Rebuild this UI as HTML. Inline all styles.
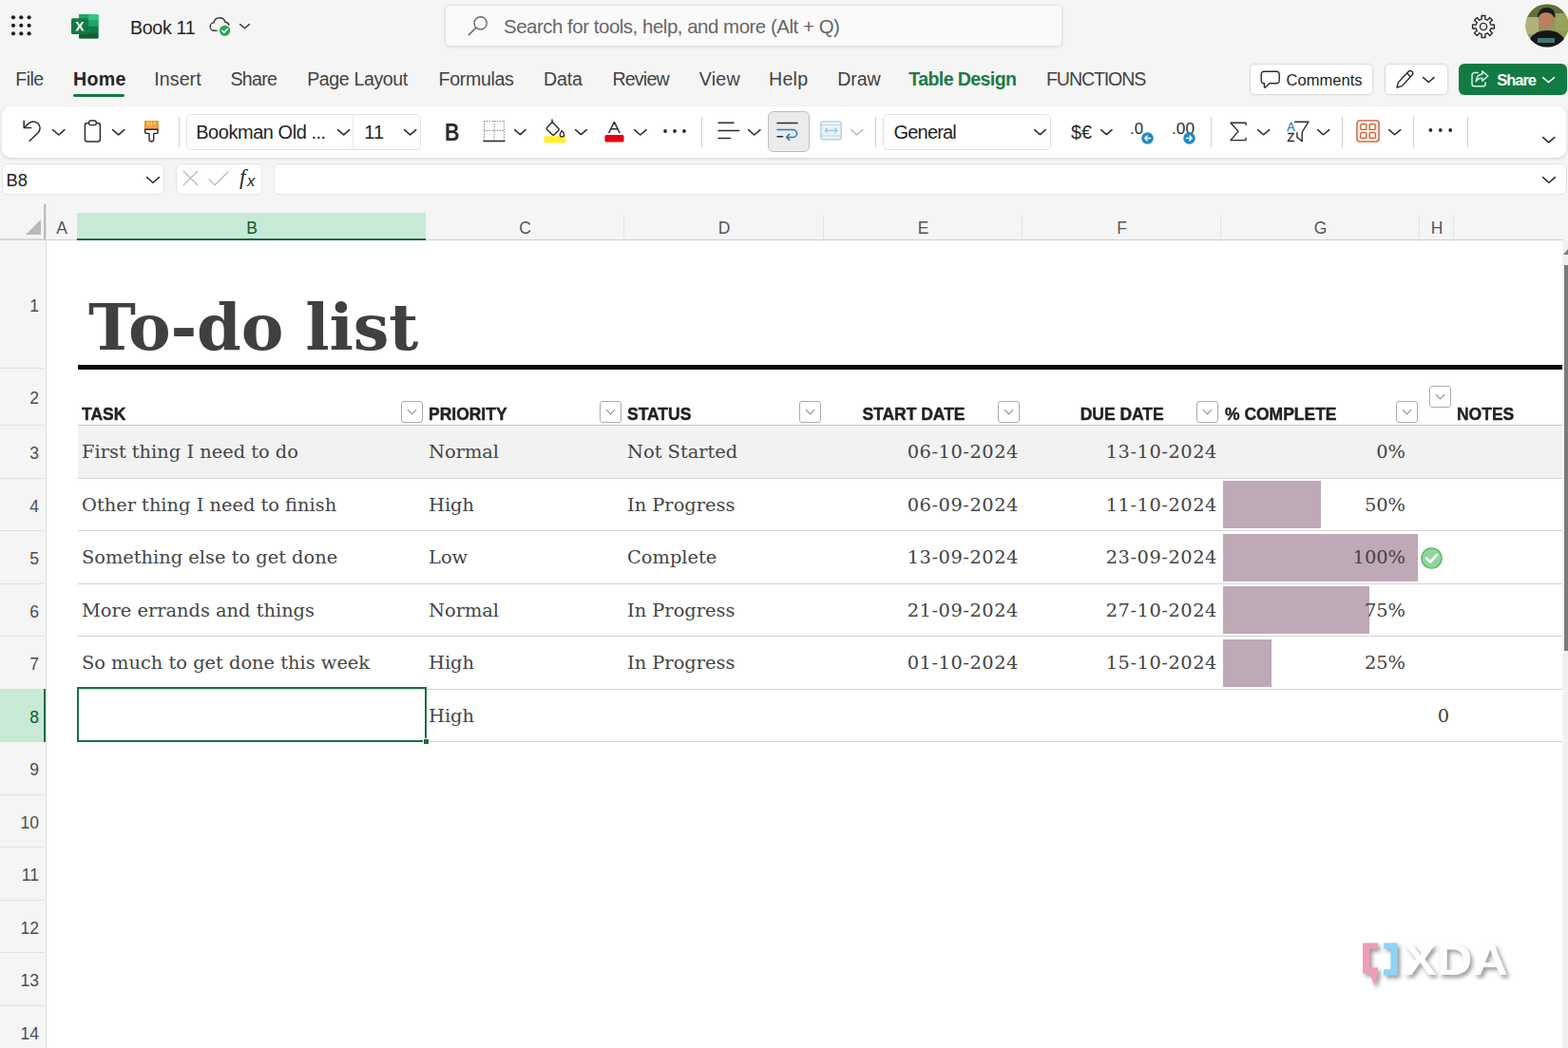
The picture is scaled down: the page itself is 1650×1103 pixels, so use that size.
<!DOCTYPE html>
<html lang="en"><head>
<meta charset="utf-8">
<title>Book 11 - Excel</title>
<style>
*{box-sizing:border-box;margin:0;padding:0}
html,body{width:1650px;height:1103px;overflow:hidden;background:#f5f5f5}
body{position:relative;font-family:"Liberation Sans",sans-serif;color:#242424}
.abs{position:absolute}
.t{position:absolute;white-space:nowrap;line-height:1}
svg{position:absolute;overflow:visible}
/* top bar */
#search{left:468px;top:5px;width:650px;height:44px;background:#fafafa;border:1px solid #e3e3e3;border-radius:5px;box-shadow:0 1px 3px rgba(0,0,0,.10)}
.tab{font-size:19.6px;color:#424242;top:74.4px}
/* ribbon */
#ribbon{left:2px;top:112px;width:1646px;height:54px;background:#fff;border-radius:9px;box-shadow:0 1px 3px rgba(0,0,0,.16)}
.sep{position:absolute;width:1px;background:#d1d1d1;top:123px;height:32px}
.box{position:absolute;background:#fff;border:1px solid #e0e0e0;border-radius:5px}
/* grid */
#grid{left:48px;top:253px;width:1596px;height:850px;background:#fff}
.ch{position:absolute;top:226.6px;height:27px;font-size:17.5px;color:#444;text-align:center;line-height:27px}
.rh{position:absolute;left:0;width:47px;font-size:17.5px;color:#444;text-align:right;padding-right:6px}
.rl{position:absolute;left:0;width:47px;height:1px;background:#e1e1e1}
.cl{position:absolute;top:227px;height:24px;width:1px;background:#e4e4e4}
.hl{position:absolute;left:82px;width:1562px;height:1px;background:#d4d4d4}
.cell{position:absolute;white-space:nowrap;font-family:"DejaVu Serif","Liberation Serif",serif;font-size:19.4px;color:#444;line-height:1}
.r{text-align:right}
.dt{letter-spacing:.55px}
.hd{position:absolute;white-space:nowrap;font-weight:bold;font-size:19px;color:#222;-webkit-text-stroke:.45px #222;line-height:1;top:426px;transform:scaleX(.92);transform-origin:left center}
.hd.rt{transform-origin:right center}
.fb{position:absolute;width:23px;height:23px;border:1px solid #ababab;border-radius:3px;background:#fff}
.fb:after{content:"";position:absolute;left:7px;top:5px;width:6px;height:6px;border-right:1.3px solid #8a8a8a;border-bottom:1.3px solid #8a8a8a;transform:rotate(45deg)}
.bar{position:absolute;left:1287px;height:50px;background:#bea9b6}
</style>
</head>
<body>
<!--TOPBAR-->
<svg style="left:0;top:0" width="44" height="50" viewBox="0 0 44 50" fill="#1f1f1f"><circle cx="14" cy="18.3" r="2.1"></circle><circle cx="14" cy="26.8" r="2.1"></circle><circle cx="14" cy="35.3" r="2.1"></circle><circle cx="22.3" cy="18.3" r="2.1"></circle><circle cx="22.3" cy="26.8" r="2.1"></circle><circle cx="22.3" cy="35.3" r="2.1"></circle><circle cx="30.6" cy="18.3" r="2.1"></circle><circle cx="30.6" cy="26.8" r="2.1"></circle><circle cx="30.6" cy="35.3" r="2.1"></circle></svg>
<svg style="left:75px;top:14px" width="29" height="27" viewBox="0 0 29 27">
    <rect x="8" y="1" width="20.5" height="25.5" rx="1.6" fill="#21a366"></rect>
    <rect x="8" y="1" width="10.3" height="6.4" fill="#21a366"></rect><rect x="18.3" y="1" width="10.2" height="6.4" rx="1" fill="#33c481"></rect>
    <rect x="8" y="7.4" width="10.3" height="6.4" fill="#107c41"></rect><rect x="18.3" y="7.4" width="10.2" height="6.4" fill="#21a366"></rect>
    <rect x="8" y="13.8" width="10.3" height="6.4" fill="#185c37"></rect><rect x="18.3" y="13.8" width="10.2" height="6.4" fill="#107c41"></rect>
    <rect x="8" y="20.2" width="20.5" height="6.3" rx="1.2" fill="#185c37"></rect>
    <rect x="0" y="5.2" width="18" height="16.8" rx="1.6" fill="#107c41"></rect>
    <path d="M4.6 9l3 4.6-3.2 4.8h2.5l2.1-3.5 2.1 3.5h2.5l-3.2-4.8 3-4.6h-2.4l-2 3.3-2-3.3z" fill="#fff"></path></svg>
<div class="t" style="left: 137px; top: 20px; font-size: 19.6px; color: rgb(36, 36, 36); letter-spacing: -0.3px;">Book 11</div>
<svg style="left:220px;top:17px" width="24" height="22" viewBox="0 0 24 22"><path d="M8 15.2H5.6a4.2 4.2 0 0 1-.5-8.4 6.1 6.1 0 0 1 11.9-.6 4 4 0 0 1 3.9 3.2" fill="none" stroke="#3b3b3b" stroke-width="1.4" stroke-linecap="round"></path><circle cx="16.6" cy="15.3" r="5.6" fill="#2ea55a"></circle><path d="M13.9 15.4l1.9 1.9 3.5-3.7" fill="none" stroke="#fff" stroke-width="1.5" stroke-linecap="round" stroke-linejoin="round"></path></svg>
<svg style="left:251.5px;top:25.2px" width="11.0" height="5.5" viewBox="0 0 11.0 5.5"><path d="M0.6 0.6L5.5 4.7L10.4 0.6" fill="none" stroke="#3b3b3b" stroke-width="1.4" stroke-linecap="round" stroke-linejoin="round"></path></svg>
<div class="abs" id="search"></div>
<svg style="left:492px;top:16px" width="22" height="22" viewBox="0 0 22 22"><circle cx="13.6" cy="8.4" r="6.6" fill="none" stroke="#6a6a6a" stroke-width="1.4"></circle><path d="M8.8 13.2L1.4 20.6" stroke="#6a6a6a" stroke-width="1.5" stroke-linecap="round"></path></svg>
<div class="t" style="left: 530px; top: 18px; font-size: 20.4px; color: rgb(102, 102, 102); letter-spacing: -0.45px;">Search for tools, help, and more (Alt + Q)</div>
<svg style="left:1548px;top:15px" width="26" height="26" viewBox="0 0 26 26"><path d="M24.43 11.01L24.43 14.99L20.78 14.87L19.82 17.18L22.49 19.67L19.67 22.49L17.18 19.82L14.87 20.78L14.99 24.43L11.01 24.43L11.13 20.78L8.82 19.82L6.33 22.49L3.51 19.67L6.18 17.18L5.22 14.87L1.57 14.99L1.57 11.01L5.22 11.13L6.18 8.82L3.51 6.33L6.33 3.51L8.82 6.18L11.13 5.22L11.01 1.57L14.99 1.57L14.87 5.22L17.18 6.18L19.67 3.51L22.49 6.33L19.82 8.82L20.78 11.13Z" fill="none" stroke="#2b2b2b" stroke-width="1.4" stroke-linejoin="round"></path><circle cx="13" cy="13" r="3.6" fill="none" stroke="#2b2b2b" stroke-width="1.4"></circle></svg>
<svg style="left:1605px;top:4px" width="46" height="46" viewBox="0 0 46 46"><defs><clipPath id="av"><circle cx="23" cy="23" r="22.6"></circle></clipPath></defs>
    <g clip-path="url(#av)"><rect width="46" height="46" fill="#8f9a55"></rect><rect width="46" height="14" fill="#5d6f3a"></rect><rect x="0" y="14" width="14" height="18" fill="#b3b07a"></rect><rect x="32" y="10" width="14" height="18" fill="#9aa35c"></rect>
    <path d="M2 46C4 33 12 28 23 28s19 5 21 18z" fill="#15171a"></path><ellipse cx="22" cy="17" rx="8" ry="10" fill="#b8805f"></ellipse><path d="M13 15c0-8 5-11 10-11s9 3 8 11c-2-4-5-6-9-6s-7 2-9 6z" fill="#1e1a18"></path><rect x="13" y="36" width="18" height="5" fill="#4f8f8a" opacity=".8"></rect></g></svg>
<!--/TOPBAR-->
<!--TABS-->
<div class="t tab" style="left: 16.2px; letter-spacing: -0.51px;">File</div>
<div class="t tab" style="left: 77px; font-weight: bold; color: rgb(36, 36, 36); letter-spacing: 0.3px;">Home</div>
<div class="t tab" style="left: 162.3px; letter-spacing: 0.07px;">Insert</div>
<div class="t tab" style="left: 242.4px; letter-spacing: -0.68px;">Share</div>
<div class="t tab" style="left: 323.2px; letter-spacing: -0.4px;">Page Layout</div>
<div class="t tab" style="left: 461.5px; letter-spacing: -0.33px;">Formulas</div>
<div class="t tab" style="left: 572px; letter-spacing: -0.14px;">Data</div>
<div class="t tab" style="left: 644.4px; letter-spacing: -0.8px;">Review</div>
<div class="t tab" style="left: 735.7px; letter-spacing: 0.28px;">View</div>
<div class="t tab" style="left: 809px; letter-spacing: 0.25px;">Help</div>
<div class="t tab" style="left: 881.2px; letter-spacing: -0.06px;">Draw</div>
<div class="t tab" style="left: 956.3px; font-weight: bold; color: rgb(27, 122, 69); letter-spacing: -0.62px;">Table Design</div>
<div class="t tab" style="left: 1101px; letter-spacing: -1.12px;">FUNCTIONS</div>
<div class="abs" style="left:77px;top:99px;width:53.5px;height:3.4px;border-radius:2px;background:#117b43"></div>
<div class="box" style="left:1314.5px;top:67px;width:130px;height:32.5px;border-color:#dcdcdc;box-shadow:0 0 2px rgba(0,0,0,.08)"></div>
<svg style="left:1326px;top:74px" width="22" height="20" viewBox="0 0 22 20"><path d="M4 1.2h13.4a2.8 2.8 0 0 1 2.8 2.8v7a2.8 2.8 0 0 1-2.8 2.8H10l-4.6 4.2a.6.6 0 0 1-1-.5v-3.7H4a2.8 2.8 0 0 1-2.8-2.8V4A2.8 2.8 0 0 1 4 1.2z" fill="none" stroke="#2b2b2b" stroke-width="1.4" stroke-linejoin="round"></path></svg>
<div class="t" style="left: 1353.5px; top: 76px; font-size: 16.5px; color: rgb(36, 36, 36); letter-spacing: 0.05px;">Comments</div>
<div class="box" style="left:1456.5px;top:67px;width:67px;height:32.5px;border-color:#dcdcdc;box-shadow:0 0 2px rgba(0,0,0,.08)"></div>
<svg style="left:1468px;top:73px" width="21" height="21" viewBox="0 0 21 21"><path d="M14.2 2.3a2.6 2.6 0 0 1 3.7 3.7L7.2 17.6 2 19l1.4-5.2z" fill="none" stroke="#2b2b2b" stroke-width="1.4" stroke-linejoin="round"></path><path d="M12.6 4l3.7 3.7" stroke="#2b2b2b" stroke-width="1.3"></path></svg>
<svg style="left:1497.0px;top:80.9px" width="12.6" height="6.3" viewBox="0 0 12.6 6.3"><path d="M0.6 0.6L6.3 5.5L12.0 0.6" fill="none" stroke="#2b2b2b" stroke-width="1.5" stroke-linecap="round" stroke-linejoin="round"></path></svg>
<div class="abs" style="left:1535px;top:66.5px;width:114px;height:33px;border-radius:6px;background:#117b43"></div>
<svg style="left:1547px;top:73px" width="21" height="20" viewBox="0 0 21 20"><path d="M8.2 3.6H4.6A2.6 2.6 0 0 0 2 6.200v9A2.600 2.600 0 0 0 4.600 17.8h9a2.600 2.600 0 0 0 2.600-2.600v-1.400" fill="none" stroke="#d5f5e2" stroke-width="1.500" stroke-linecap="round"></path><path d="M12.800 1.800l6 5.200-6 5.200v-3c-3.200 0-5.200 1-6.600 3.400.3-4 2.400-7.200 6.600-7.700z" fill="none" stroke="#d5f5e2" stroke-width="1.500" stroke-linejoin="round"></path></svg>
<div class="t" style="left: 1575.3px; top: 76px; font-size: 16.5px; color: rgb(255, 255, 255); font-weight: bold; letter-spacing: -1.05px;">Share</div>
<svg style="left:1623.0px;top:80.8px" width="13.0" height="6.5" viewBox="0 0 13.0 6.5"><path d="M0.6 0.6L6.5 5.7L12.4 0.6" fill="none" stroke="#e8fff1" stroke-width="1.6" stroke-linecap="round" stroke-linejoin="round"></path></svg>
<!--/TABS-->
<!--RIBBON-->
<div class="abs" id="ribbon"></div>
<svg style="left:23px;top:125px" width="22" height="25" viewBox="0 0 22 25"><path d="M2.2 2.2v7.4h7.4" fill="none" stroke="#2b2b2b" stroke-width="1.5" stroke-linecap="round" stroke-linejoin="round"></path><path d="M2.6 9.2l4.600-4.300a7 7 0 0 1 9.700 10.100L8.200 23.200" fill="none" stroke="#2b2b2b" stroke-width="1.500" stroke-linecap="round" stroke-linejoin="round"></path></svg>
<svg style="left:54.7px;top:135.6px" width="13.5" height="6.8" viewBox="0 0 13.5 6.8"><path d="M0.6 0.6L6.8 6.0L12.9 0.6" fill="none" stroke="#2b2b2b" stroke-width="1.5" stroke-linecap="round" stroke-linejoin="round"></path></svg>
<svg style="left:87.5px;top:126px" width="19" height="24" viewBox="0 0 19 24"><rect x="1.4" y="3.4" width="16" height="19.6" rx="2.4" fill="none" stroke="#2b2b2b" stroke-width="1.5"></rect><rect x="5.600" y="1" width="7.600" height="4.600" rx="1.600" fill="#fff" stroke="#2b2b2b" stroke-width="1.400"></rect></svg>
<svg style="left:117.6px;top:135.7px" width="13.4" height="6.7" viewBox="0 0 13.4 6.7"><path d="M0.6 0.6L6.7 5.9L12.8 0.6" fill="none" stroke="#2b2b2b" stroke-width="1.5" stroke-linecap="round" stroke-linejoin="round"></path></svg>
<svg style="left:151px;top:126px" width="17" height="24" viewBox="0 0 17 24"><path d="M1.6 1.600h13.600v8.600H1.600z" fill="#f4a938" stroke="#e08f1e" stroke-width="1.200" stroke-linejoin="round"></path><path d="M5 1.600v4M8.400 1.600v5M11.800 1.600v3.500" stroke="#fbd58a" stroke-width="1.300"></path><path d="M1.600 10.200h13.600v2.600a1.600 1.600 0 0 1-1.600 1.600h-2.800v6.200a2.400 2.400 0 0 1-4.800 0v-6.200H3.200a1.600 1.600 0 0 1-1.600-1.600z" fill="#fff" stroke="#2b2b2b" stroke-width="1.400" stroke-linejoin="round"></path></svg>
<div class="sep" style="left:188px"></div>
<div class="box" style="left:195.500px;top:120px;width:247px;height:38px;border-color:#e2e2e2"></div>
<div class="abs" style="left:371px;top:121px;width:1px;height:36px;background:#e6e6e6"></div>
<div class="t" style="left: 206.2px; top: 129px; font-size: 20px; color: rgb(36, 36, 36); letter-spacing: -0.46px;">Bookman Old ...</div>
<svg style="left:354.5px;top:135.7px" width="13.3" height="6.7" viewBox="0 0 13.3 6.7"><path d="M0.6 0.6L6.7 5.9L12.7 0.6" fill="none" stroke="#2b2b2b" stroke-width="1.5" stroke-linecap="round" stroke-linejoin="round"></path></svg>
<div class="t " style="left:383.3px;top:129px;font-size:20px;color:#242424">11</div>
<svg style="left:425.0px;top:135.7px" width="13.3" height="6.7" viewBox="0 0 13.3 6.7"><path d="M0.6 0.6L6.7 5.9L12.7 0.6" fill="none" stroke="#2b2b2b" stroke-width="1.5" stroke-linecap="round" stroke-linejoin="round"></path></svg>
<div class="t " style="left:468.3px;top:127px;font-size:25px;color:#2b2b2b;font-weight:bold;transform:scaleX(.86);transform-origin:left">B</div>
<svg style="left:507.500px;top:126px" width="24" height="24" viewBox="0 0 24 24"><g stroke="#7a7a7a" stroke-width="1.100" stroke-dasharray="1.200 1.500" fill="none"><path d="M1.5 1.500v20"></path><path d="M12 1.500v20"></path><path d="M22.5 1.500v20"></path><path d="M1.500 1.5h21"></path><path d="M1.500 11.5h21"></path></g><path d="M0.500 22.500h23" stroke="#2b2b2b" stroke-width="1.600"></path></svg>
<svg style="left:540.9px;top:135.8px" width="12.7" height="6.4" viewBox="0 0 12.7 6.4"><path d="M0.6 0.6L6.4 5.6L12.1 0.6" fill="none" stroke="#2b2b2b" stroke-width="1.5" stroke-linecap="round" stroke-linejoin="round"></path></svg>
<svg style="left:571.500px;top:125px" width="24" height="26" viewBox="0 0 24 26"><rect x="0.500" y="18.200" width="23" height="7.200" rx="1.200" fill="#ffee33"></rect><path d="M9 1v5.600" stroke="#2b2b2b" stroke-width="1.400" stroke-linecap="round"></path><path d="M9.200 3.600l6.600 6.600a1.400 1.400 0 0 1 0 2l-4.600 4.600a1.400 1.400 0 0 1-2 0L3.600 11.200a1.400 1.400 0 0 1 0-2z" fill="#fff" stroke="#2b2b2b" stroke-width="1.400" stroke-linejoin="round"></path><path d="M19.400 12.400c1.400 2 2.200 3.200 2.200 4.300a2.200 2.200 0 0 1-4.400 0c0-1.100.8-2.300 2.200-4.300z" fill="#fff" stroke="#2b2b2b" stroke-width="1.300" stroke-linejoin="round"></path></svg>
<svg style="left:604.5px;top:135.8px" width="12.8" height="6.4" viewBox="0 0 12.8 6.4"><path d="M0.6 0.6L6.4 5.6L12.2 0.6" fill="none" stroke="#2b2b2b" stroke-width="1.5" stroke-linecap="round" stroke-linejoin="round"></path></svg>
<svg style="left:636px;top:127px" width="21" height="24" viewBox="0 0 21 24"><path d="M4.800 12.600L10.400 1.400 16 12.600M6.800 8.800h7.200" fill="none" stroke="#2b2b2b" stroke-width="1.400" stroke-linecap="round" stroke-linejoin="round"></path><rect x="0.500" y="15" width="20" height="7.600" rx="1.600" fill="#e3000f"></rect></svg>
<svg style="left:667.4px;top:135.6px" width="13.6" height="6.8" viewBox="0 0 13.6 6.8"><path d="M0.6 0.6L6.8 6.0L13.0 0.6" fill="none" stroke="#2b2b2b" stroke-width="1.5" stroke-linecap="round" stroke-linejoin="round"></path></svg>
<svg style="left:696px;top:134px" width="28" height="8" viewBox="0 0 28 8" fill="#2b2b2b"><circle cx="4" cy="4" r="1.900"></circle><circle cx="14" cy="4" r="1.900"></circle><circle cx="24" cy="4" r="1.900"></circle></svg>
<div class="sep" style="left:738px"></div>
<svg style="left:755px;top:127px" width="24" height="21" viewBox="0 0 24 21"><path d="M1 2.200h16M1 10.400h21.600M1 18.600h12.400" stroke="#2b2b2b" stroke-width="1.500" stroke-linecap="round"></path></svg>
<svg style="left:786.5px;top:135.6px" width="13.5" height="6.8" viewBox="0 0 13.5 6.8"><path d="M0.6 0.6L6.8 6.0L12.9 0.6" fill="none" stroke="#2b2b2b" stroke-width="1.5" stroke-linecap="round" stroke-linejoin="round"></path></svg>
<div class="abs" style="left:807.500px;top:116.500px;width:44px;height:43px;background:#ebebeb;border:1px solid #bdbdbd;border-radius:6px"></div>
<svg style="left:817px;top:128px" width="24" height="21" viewBox="0 0 24 21"><path d="M1 1.500h21" stroke="#2b2b2b" stroke-width="1.500" stroke-linecap="round"></path><path d="M1 8.600h16.600a3.900 3.900 0 0 1 0 7.800H11" fill="none" stroke="#2a7ab8" stroke-width="1.500" stroke-linecap="round"></path><path d="M13.600 13.400l-3 3 3 3" fill="none" stroke="#2a7ab8" stroke-width="1.500" stroke-linecap="round" stroke-linejoin="round"></path><path d="M1 15.800h5.600" stroke="#2b2b2b" stroke-width="1.500" stroke-linecap="round"></path></svg>
<svg style="left:862.500px;top:127px" width="23" height="21" viewBox="0 0 23 21"><rect x="0.800" y="0.800" width="21.400" height="19" rx="2.600" fill="#e9f3f8" stroke="#a9cfe2" stroke-width="1.300"></rect><path d="M0.800 4.600h21.400M0.800 16h21.400" stroke="#b9d6e4" stroke-width="1"></path><path d="M5.400 10.300h12.200M7.600 8l-2.400 2.300 2.400 2.300M15.400 8l2.400 2.300-2.400 2.300" fill="none" stroke="#9cc5da" stroke-width="1.200" stroke-linecap="round" stroke-linejoin="round"></path></svg>
<svg style="left:894.7px;top:135.7px" width="13.3" height="6.6" viewBox="0 0 13.3 6.6"><path d="M0.6 0.6L6.6 5.8L12.7 0.6" fill="none" stroke="#b8b8b8" stroke-width="1.4" stroke-linecap="round" stroke-linejoin="round"></path></svg>
<div class="sep" style="left:921px"></div>
<div class="box" style="left:928.500px;top:120px;width:177px;height:38px;border-color:#e2e2e2"></div>
<div class="t" style="left: 940.6px; top: 129px; font-size: 20px; color: rgb(36, 36, 36); letter-spacing: -0.84px;">General</div>
<svg style="left:1088.2px;top:135.8px" width="12.8" height="6.4" viewBox="0 0 12.8 6.4"><path d="M0.6 0.6L6.4 5.6L12.2 0.6" fill="none" stroke="#2b2b2b" stroke-width="1.5" stroke-linecap="round" stroke-linejoin="round"></path></svg>
<svg style="left:1126px;top:126px" width="26" height="26"><text x="1" y="19.6" font-family="Liberation Sans,sans-serif" font-size="21" fill="#2b2b2b" textLength="22" lengthAdjust="spacingAndGlyphs">$€</text></svg>
<svg style="left:1158.3px;top:135.8px" width="12.7" height="6.4" viewBox="0 0 12.7 6.4"><path d="M0.6 0.6L6.4 5.6L12.1 0.6" fill="none" stroke="#2b2b2b" stroke-width="1.5" stroke-linecap="round" stroke-linejoin="round"></path></svg>
<svg style="left:1188px;top:124px" width="20" height="22"><text x="1" y="17.3" font-family="Liberation Sans,sans-serif" font-size="17.4" fill="#2b2b2b" textLength="14" lengthAdjust="spacingAndGlyphs">.0</text></svg>
<svg style="left:1201px;top:138.700px" width="13" height="13" viewBox="0 0 13 13"><circle cx="6.500" cy="6.500" r="6.200" fill="#1f8ac4"></circle><path d="M9.600 6.500H3.800M6.200 4l-2.500 2.500 2.500 2.500" fill="none" stroke="#fff" stroke-width="1.400" stroke-linecap="round" stroke-linejoin="round"></path></svg>
<svg style="left:1232px;top:124px" width="28" height="22"><text x="1" y="17.3" font-family="Liberation Sans,sans-serif" font-size="17.4" fill="#2b2b2b" textLength="24" lengthAdjust="spacingAndGlyphs">.00</text></svg>
<svg style="left:1245.200px;top:138.700px" width="13" height="13" viewBox="0 0 13 13"><circle cx="6.500" cy="6.500" r="6.200" fill="#1f8ac4"></circle><path d="M3.400 6.500h5.800M6.800 4l2.500 2.500-2.500 2.500" fill="none" stroke="#fff" stroke-width="1.400" stroke-linecap="round" stroke-linejoin="round"></path></svg>
<div class="sep" style="left:1274px"></div>
<svg style="left:1292.500px;top:127.500px" width="20" height="21" viewBox="0 0 20 21"><path d="M18 3.600V1.200H2l8 9.200-8 9.200h16v-2.400" fill="none" stroke="#2b2b2b" stroke-width="1.400" stroke-linejoin="round" stroke-linecap="round"></path></svg>
<svg style="left:1322.7px;top:135.7px" width="13.3" height="6.6" viewBox="0 0 13.3 6.6"><path d="M0.6 0.6L6.6 5.8L12.7 0.6" fill="none" stroke="#2b2b2b" stroke-width="1.5" stroke-linecap="round" stroke-linejoin="round"></path></svg>
<svg style="left:1352.500px;top:126.500px" width="26" height="25" viewBox="0 0 26 25"><path d="M9.600 1.200H23.900L17.200 12V21.800L11.900 17.400V12.600" fill="none" stroke="#2b2b2b" stroke-width="1.400" stroke-linejoin="round" stroke-linecap="round"></path><text x="1.200" y="10.800" font-family="Liberation Sans,sans-serif" font-size="12.600" fill="#1f7fc0" stroke="#1f7fc0" stroke-width=".3">A</text><text x="1.600" y="22.200" font-family="Liberation Sans,sans-serif" font-size="12.400" fill="#2b2b2b" stroke="#2b2b2b" stroke-width=".3">Z</text></svg>
<svg style="left:1385.7px;top:135.7px" width="13.3" height="6.6" viewBox="0 0 13.3 6.6"><path d="M0.6 0.6L6.6 5.8L12.7 0.6" fill="none" stroke="#2b2b2b" stroke-width="1.5" stroke-linecap="round" stroke-linejoin="round"></path></svg>
<div class="sep" style="left:1412px"></div>
<svg style="left:1427px;top:125.500px" width="25" height="24" viewBox="0 0 25 24"><rect x="0.900" y="0.900" width="23.200" height="22.200" rx="3" fill="#fbe9df" stroke="#c2623a" stroke-width="1.400"></rect><g fill="#fff" stroke="#c2623a" stroke-width="1.300"><rect x="4.800" y="4.600" width="6" height="5.800" rx="1"></rect><rect x="14.200" y="4.600" width="6" height="5.800" rx="1"></rect><rect x="4.800" y="13.600" width="6" height="5.800" rx="1"></rect><rect x="14.200" y="13.600" width="6" height="5.800" rx="1"></rect></g></svg>
<svg style="left:1460.7px;top:135.7px" width="13.3" height="6.6" viewBox="0 0 13.3 6.6"><path d="M0.6 0.6L6.6 5.8L12.7 0.6" fill="none" stroke="#2b2b2b" stroke-width="1.5" stroke-linecap="round" stroke-linejoin="round"></path></svg>
<div class="sep" style="left:1487px"></div>
<svg style="left:1502px;top:133.300px" width="28" height="8" viewBox="0 0 28 8" fill="#2b2b2b"><circle cx="3.400" cy="4" r="1.900"></circle><circle cx="13.800" cy="4" r="1.900"></circle><circle cx="24.200" cy="4" r="1.900"></circle></svg>
<div class="sep" style="left:1544px"></div>
<svg style="left:1623.3px;top:144.3px" width="13.4" height="6.7" viewBox="0 0 13.4 6.7"><path d="M0.6 0.6L6.7 5.9L12.8 0.6" fill="none" stroke="#2b2b2b" stroke-width="1.5" stroke-linecap="round" stroke-linejoin="round"></path></svg>
<!--/RIBBON-->
<!--FORMULA-->
<div class="box" style="left:2px;top:172px;width:170.500px;height:33px;border-color:#e3e3e3;border-radius:6px"></div>
<div class="t " style="left:6.6px;top:180.8px;font-size:18.3px;color:#242424">B8</div>
<svg style="left:154.0px;top:186.0px" width="14.0" height="7.0" viewBox="0 0 14.0 7.0"><path d="M0.6 0.6L7.0 6.2L13.4 0.6" fill="none" stroke="#2b2b2b" stroke-width="1.5" stroke-linecap="round" stroke-linejoin="round"></path></svg>
<div class="box" style="left:184.500px;top:172px;width:91px;height:33px;border-color:#e3e3e3;border-radius:6px"></div>
<svg style="left:191.500px;top:179px" width="17" height="17" viewBox="0 0 17 17"><path d="M1.200 1.200l14.600 14.600M15.800 1.200L1.200 15.800" stroke="#bdbdbd" stroke-width="1.400" stroke-linecap="round"></path></svg>
<svg style="left:219px;top:179.500px" width="22" height="16" viewBox="0 0 22 16"><path d="M1 8.800l6 6L21 1" fill="none" stroke="#bdbdbd" stroke-width="1.400" stroke-linecap="round" stroke-linejoin="round"></path></svg>
<div class="t" style="left:252px;top:174px;font:italic 23px 'Liberation Serif',serif;color:#2b2b2b">f<span style="font:italic 16.5px 'Liberation Sans',sans-serif;position:relative;top:1.5px;margin-left:1.5px">x</span></div>
<div class="box" style="left:287.500px;top:172px;width:1361px;height:33px;border-color:#e3e3e3;border-radius:6px"></div>
<svg style="left:1623.0px;top:186.0px" width="14.0" height="7.0" viewBox="0 0 14.0 7.0"><path d="M0.6 0.6L7.0 6.2L13.4 0.6" fill="none" stroke="#2b2b2b" stroke-width="1.5" stroke-linecap="round" stroke-linejoin="round"></path></svg>
<!--/FORMULA-->
<!--GRID-->
<div class="abs" id="grid"></div>
<div class="abs" style="left:0;top:251px;width:48px;height:2px;background:#d6d6d6"></div>
<div class="abs" style="left:47.500px;top:215px;width:1.500px;height:888px;background:#dedede"></div>
<svg style="left:26px;top:230px" width="18" height="18" viewBox="0 0 18 18"><path d="M17 1V17H1Z" fill="#b9b9b9"></path></svg>
<div class="abs" style="left:46px;top:215px;width:2px;height:37px;background:#bdbdbd"></div>
<div class="abs" style="left:48px;top:252px;width:1597px;height:1px;background:#cfcfcf"></div>
<div class="abs" style="left:81px;top:224px;width:367px;height:29px;background:#c6ead7;border-bottom:2.5px solid #1d6440"></div>
<div class="ch" style="left:48px;width:34px;color:#555">A</div>
<div class="ch" style="left:82px;width:366px;color:#0f5c32">B</div>
<div class="ch" style="left:448px;width:209px;color:#555">C</div>
<div class="ch" style="left:657px;width:210px;color:#555">D</div>
<div class="ch" style="left:867px;width:209px;color:#555">E</div>
<div class="ch" style="left:1076px;width:209px;color:#555">F</div>
<div class="ch" style="left:1285px;width:209px;color:#555">G</div>
<div class="ch" style="left:1494px;width:36px;color:#555">H</div>
<div class="cl" style="left:656px"></div>
<div class="cl" style="left:866px"></div>
<div class="cl" style="left:1075px"></div>
<div class="cl" style="left:1284px"></div>
<div class="cl" style="left:1493px"></div>
<div class="cl" style="left:1529px"></div>
<div class="abs" style="left:0;top:725px;width:48px;height:56px;background:#c9e9d7;border-right:2px solid #1f6e43"></div>
<div class="rh" style="top:313.5px;height:17px;line-height:17px;color:#4c4c4c">1</div>
<div class="rl" style="top:387px"></div>
<div class="rh" style="top:411.0px;height:17px;line-height:17px;color:#4c4c4c">2</div>
<div class="rl" style="top:447px"></div>
<div class="rh" style="top:469.0px;height:17px;line-height:17px;color:#4c4c4c">3</div>
<div class="rl" style="top:503px"></div>
<div class="rh" style="top:524.5px;height:17px;line-height:17px;color:#4c4c4c">4</div>
<div class="rl" style="top:558px"></div>
<div class="rh" style="top:580.0px;height:17px;line-height:17px;color:#4c4c4c">5</div>
<div class="rl" style="top:614px"></div>
<div class="rh" style="top:635.5px;height:17px;line-height:17px;color:#4c4c4c">6</div>
<div class="rl" style="top:669px"></div>
<div class="rh" style="top:691.0px;height:17px;line-height:17px;color:#4c4c4c">7</div>
<div class="rh" style="top:746.5px;height:17px;line-height:17px;color:#0f5c32">8</div>
<div class="rh" style="top:802.0px;height:17px;line-height:17px;color:#4c4c4c">9</div>
<div class="rl" style="top:836px"></div>
<div class="rh" style="top:857.5px;height:17px;line-height:17px;color:#4c4c4c">10</div>
<div class="rl" style="top:891px"></div>
<div class="rh" style="top:913.0px;height:17px;line-height:17px;color:#4c4c4c">11</div>
<div class="rl" style="top:947px"></div>
<div class="rh" style="top:968.5px;height:17px;line-height:17px;color:#4c4c4c">12</div>
<div class="rl" style="top:1002px"></div>
<div class="rh" style="top:1024.0px;height:17px;line-height:17px;color:#4c4c4c">13</div>
<div class="rl" style="top:1058px"></div>
<div class="rh" style="top:1080.0px;height:17px;line-height:17px;color:#4c4c4c">14</div>
<div class="t" style="left:93px;top:305px;font:bold 67px 'DejaVu Serif','Liberation Serif',serif;color:#404040;letter-spacing:-.2px">To-do list</div>
<div class="abs" style="left:82px;top:384px;width:1562px;height:5px;background:#0a0a0a"></div>
<div class="abs" style="left:82px;top:448px;width:1562px;height:55px;background:#f2f2f2"></div>
<div class="hl" style="top:447px;background:#c4c4c4"></div>
<div class="hl" style="top:503px"></div>
<div class="hl" style="top:558px"></div>
<div class="hl" style="top:614px"></div>
<div class="hl" style="top:669px"></div>
<div class="hl" style="top:725px"></div>
<div class="hl" style="top:780px"></div>
<div class="hd" style="left:86px">TASK</div>
<div class="hd" style="left:451px">PRIORITY</div>
<div class="hd" style="left:660px">STATUS</div>
<div class="hd rt" style="right:634px">START DATE</div>
<div class="hd rt" style="right:425px">DUE DATE</div>
<div class="hd" style="left:1289px">% COMPLETE</div>
<div class="hd" style="left:1533px">NOTES</div>
<div class="fb" style="left:421.5px;top:422px"></div>
<div class="fb" style="left:630.5px;top:422px"></div>
<div class="fb" style="left:840.5px;top:422px"></div>
<div class="fb" style="left:1050px;top:422px"></div>
<div class="fb" style="left:1259px;top:422px"></div>
<div class="fb" style="left:1468.5px;top:422px"></div>
<div class="fb" style="left:1503.5px;top:406px"></div>
<div class="bar" style="top:506.0px;width:103px"></div>
<div class="bar" style="top:561.5px;width:205px"></div>
<div class="bar" style="top:617.0px;width:154px"></div>
<div class="bar" style="top:672.5px;width:51px"></div>
<div class="cell" style="left:86px;top:466.0px">First thing I need to do</div>
<div class="cell" style="left:451px;top:466.0px">Normal</div>
<div class="cell" style="left:660px;top:466.0px">Not Started</div>
<div class="cell r dt" style="right:578px;top:466.0px">06-10-2024</div>
<div class="cell r dt" style="right:369px;top:466.0px">13-10-2024</div>
<div class="cell r" style="right:171px;top:466.0px">0%</div>
<div class="cell" style="left:86px;top:521.5px">Other thing I need to finish</div>
<div class="cell" style="left:451px;top:521.5px">High</div>
<div class="cell" style="left:660px;top:521.5px">In Progress</div>
<div class="cell r dt" style="right:578px;top:521.5px">06-09-2024</div>
<div class="cell r dt" style="right:369px;top:521.5px">11-10-2024</div>
<div class="cell r" style="right:171px;top:521.5px">50%</div>
<div class="cell" style="left:86px;top:577.0px">Something else to get done</div>
<div class="cell" style="left:451px;top:577.0px">Low</div>
<div class="cell" style="left:660px;top:577.0px">Complete</div>
<div class="cell r dt" style="right:578px;top:577.0px">13-09-2024</div>
<div class="cell r dt" style="right:369px;top:577.0px">23-09-2024</div>
<div class="cell r" style="right:171px;top:577.0px">100%</div>
<div class="cell" style="left:86px;top:632.5px">More errands and things</div>
<div class="cell" style="left:451px;top:632.5px">Normal</div>
<div class="cell" style="left:660px;top:632.5px">In Progress</div>
<div class="cell r dt" style="right:578px;top:632.5px">21-09-2024</div>
<div class="cell r dt" style="right:369px;top:632.5px">27-10-2024</div>
<div class="cell r" style="right:171px;top:632.5px">75%</div>
<div class="cell" style="left:86px;top:688.0px">So much to get done this week</div>
<div class="cell" style="left:451px;top:688.0px">High</div>
<div class="cell" style="left:660px;top:688.0px">In Progress</div>
<div class="cell r dt" style="right:578px;top:688.0px">01-10-2024</div>
<div class="cell r dt" style="right:369px;top:688.0px">15-10-2024</div>
<div class="cell r" style="right:171px;top:688.0px">25%</div>
<div class="cell" style="left:451px;top:743.5px">High</div>
<div class="cell r" style="right:125px;top:743.5px">0</div>
<svg style="left:1495px;top:576px" width="23" height="23" viewBox="0 0 23 23"><circle cx="11.5" cy="11.5" r="10.6" fill="#8fd69a" stroke="#5fb56f" stroke-width="1.4"></circle><path d="M6 11.5l4 4 7-7.5" fill="none" stroke="#fff" stroke-width="2.6" stroke-linecap="round" stroke-linejoin="round"></path></svg>
<div class="abs" style="left:81px;top:723px;width:368px;height:58px;border:2px solid #1b6e42"></div>
<div class="abs" style="left:445px;top:777px;width:7px;height:7px;background:#1b6e42;border:1px solid #fff"></div>
<div class="abs" style="left:1645px;top:253px;width:5px;height:850px;background:#f0f0f0"></div>
<div class="abs" style="left:1646px;top:279px;width:4px;height:406px;background:#7a7a7a"></div>
<svg style="left:1645px;top:262px" width="5" height="6" viewBox="0 0 5 6"><path d="M0 6L5 0V6Z" fill="#7a7a7a"></path></svg>
<svg style="left:1428px;top:988px" width="175" height="62" viewBox="0 0 175 62">
<defs><filter id="ds" x="-10%" y="-20%" width="130%" height="150%"><feGaussianBlur stdDeviation="2.100"></feGaussianBlur></filter></defs>
<g filter="url(#ds)" opacity=".52" transform="translate(2.600,3)" fill="#3c3c3c"><path d="M6 4.400H22V10.600H13.300V30.300H22V36.500L18.300 50L13.600 36.500H6Z"></path><path d="M28 4.400H42.600V38.400H28V32.200H35.400V10.600H28Z"></path><text x="49" y="38.400" font-family="Liberation Sans,sans-serif" font-weight="bold" font-size="46.600" textLength="110" lengthAdjust="spacingAndGlyphs">XDA</text></g>
<path d="M6 4.400H22V10.600H13.300V30.300H22V36.500L18.300 50L13.600 36.500H6Z" fill="#ef9db6"></path><path d="M28 4.400H42.600V38.400H28V32.200H35.400V10.600H28Z" fill="#8fd3f6"></path>
<text x="49" y="38.400" font-family="Liberation Sans,sans-serif" font-weight="bold" font-size="46.600" textLength="110" lengthAdjust="spacingAndGlyphs" fill="#fefefe">XDA</text></svg>
<!--/GRID-->


</body></html>
